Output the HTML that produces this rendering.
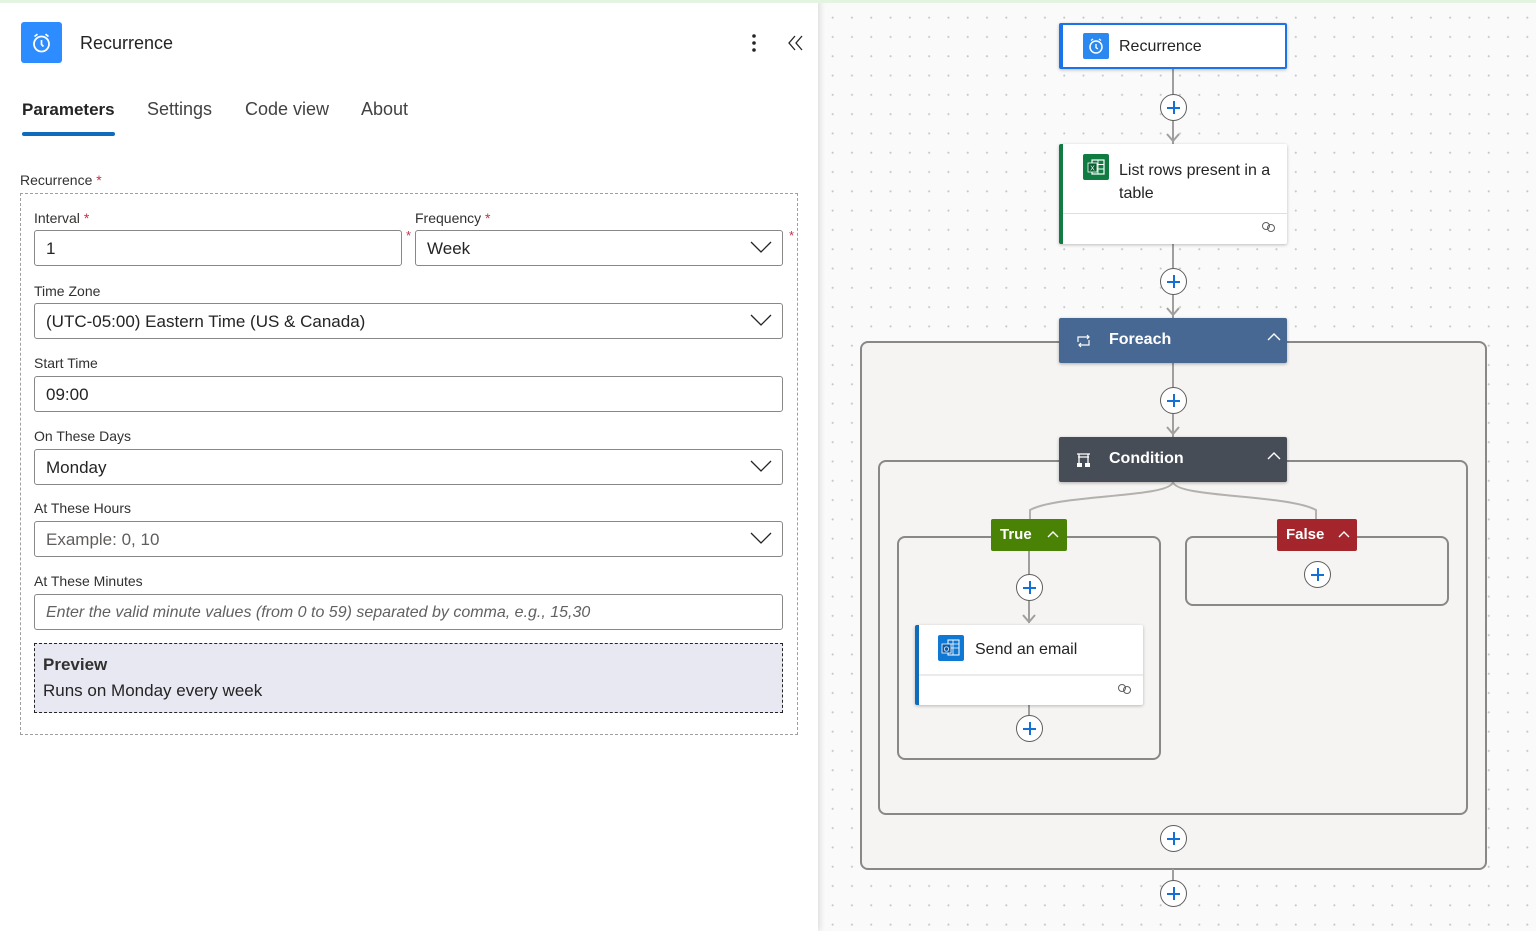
<!DOCTYPE html>
<html><head><meta charset="utf-8"><style>
*{box-sizing:border-box;margin:0;padding:0}
body{width:1536px;height:931px;overflow:hidden;position:relative;font-family:"Liberation Sans",sans-serif;color:#242424;background:#fafafa}
.a{position:absolute}
#canvas{left:818px;top:0;width:718px;height:931px;background-color:#fafafa;background-image:radial-gradient(circle,#c8c8c8 0.9px,transparent 1.2px);background-size:19.3px 19.3px;background-position:5px 8px}
#panel{left:0;top:0;width:818px;height:931px;background:#fff;box-shadow:2px 0 6px rgba(0,0,0,.12)}
#topline{left:0;top:0;width:1536px;height:3px;background:#e3f5e0}
.lbl{font-size:14px;color:#323130}
.req{color:#c4314b}
.inp{border:1px solid #8a8886;border-radius:3px;height:36px;font-size:17px;padding:8px 11px;color:#242424;background:#fff}
.chev{position:absolute;right:10px;top:8px}
.card{background:#fff;box-shadow:0 1px 3px rgba(0,0,0,.25);border-radius:2px}
.plus{width:27px;height:27px;border-radius:50%;border:1px solid #605e5c;background:#fff}
.plus:before,.plus:after{content:"";position:absolute;background:#1570d6}
.plus:before{left:6px;top:12px;width:13px;height:1.6px}
.plus:after{left:12px;top:6px;width:1.6px;height:13px}
.vl{width:2px;background:#a19f9d}
.box{border:2px solid #8a8886;border-radius:8px;background:#f5f4f2}
.hdr{color:#fff;font-size:16px;font-weight:bold;box-shadow:0 1px 3px rgba(0,0,0,.3);border-radius:2px}
.ct{font-size:16px}
</style></head><body>
<div id="canvas" class="a"></div>

<div class="a vl" style="left:1172px;top:69px;height:75px"></div>
<div class="a vl" style="left:1172px;top:244px;height:74px"></div>
<div class="a box" style="left:860px;top:341px;width:627px;height:529px"></div>
<div class="a vl" style="left:1172px;top:363px;height:74px"></div>
<div class="a box" style="left:878px;top:460px;width:590px;height:355px"></div>
<div class="a box" style="left:897px;top:536px;width:264px;height:224px"></div>
<div class="a box" style="left:1185px;top:536px;width:264px;height:70px"></div>
<svg class="a" style="left:1020px;top:480px" width="310" height="45"><path d="M153 2 C150 18 40 14 10 30 L10 40 M153 2 C156 18 266 14 296 30 L296 40" fill="none" stroke="#b3b0ad" stroke-width="2"/></svg>
<div class="a vl" style="left:1028px;top:551px;height:72px"></div>
<div class="a vl" style="left:1028px;top:705px;height:12px"></div>
<div class="a vl" style="left:1172px;top:869px;height:12px"></div>
<svg class="a" style="left:1164px;top:130px" width="18" height="14"><path d="M3 4 L9 11 L15 4" fill="none" stroke="#a19f9d" stroke-width="2"/></svg>
<svg class="a" style="left:1164px;top:304px" width="18" height="14"><path d="M3 4 L9 11 L15 4" fill="none" stroke="#a19f9d" stroke-width="2"/></svg>
<svg class="a" style="left:1164px;top:423px" width="18" height="14"><path d="M3 4 L9 11 L15 4" fill="none" stroke="#a19f9d" stroke-width="2"/></svg>
<svg class="a" style="left:1020px;top:611px" width="18" height="14"><path d="M3 4 L9 11 L15 4" fill="none" stroke="#a19f9d" stroke-width="2"/></svg>

<div class="a card" style="left:1059px;top:23px;width:228px;height:46px;border:2px solid #1a73e8;border-left-width:4px"></div>
<div class="a" style="left:1083px;top:33px;width:26px;height:26px;background:#2b88f0;border-radius:2px"><svg width="26" height="26"><circle cx="13" cy="14" r="6" fill="none" stroke="#fff" stroke-width="1.5"/><path d="M13 11v3.5l1.8 1.5M8 7.5l2-1.5M18 7.5l-2-1.5" stroke="#fff" stroke-width="1.4" fill="none"/></svg></div>
<div class="a ct" style="left:1119px;top:38px">Recurrence</div>

<div class="a card" style="left:1059px;top:144px;width:228px;height:100px;border-left:4px solid #107c41"></div>
<div class="a" style="left:1063px;top:213px;width:224px;height:1px;background:#e1dfdd"></div>
<div class="a" style="left:1083px;top:154px;width:26px;height:26px;background:#107c41;border-radius:2px"><svg width="26" height="26"><rect x="9" y="6" width="12" height="14" fill="none" stroke="#fff" stroke-width="1.2"/><path d="M9 10.5h12M9 15h12M15 6v14" stroke="#fff" stroke-width=".9"/><rect x="5" y="9" width="9" height="9" fill="#0b5c30" stroke="#fff" stroke-width=".8"/><text x="9.5" y="16.5" font-size="7" fill="#fff" text-anchor="middle" font-family="Liberation Sans">X</text></svg></div>
<div class="a ct" style="left:1119px;top:159px;line-height:23px;width:168px">List rows present in a table</div>
<svg class="a" style="left:1261px;top:221px" width="16" height="12"><circle cx="5" cy="5" r="3.5" fill="none" stroke="#605e5c"/><circle cx="10" cy="7" r="3.5" fill="none" stroke="#605e5c"/></svg>

<div class="a hdr" style="left:1059px;top:318px;width:228px;height:45px;background:#476892"></div>
<svg class="a" style="left:1075px;top:333px" width="18" height="16"><path d="M3 9V4h11M12 2l2 2-2 2M14 7v5H4M6 10l-2 2 2 2" fill="none" stroke="#fff" stroke-width="1.2"/></svg>
<div class="a" style="left:1109px;top:331px;font-size:16px;color:#fff;font-weight:bold">Foreach</div>
<svg class="a" style="left:1266px;top:331px" width="16" height="12"><path d="M2 9l6-6 6 6" fill="none" stroke="#fff" stroke-width="1.4"/></svg>

<div class="a hdr" style="left:1059px;top:437px;width:228px;height:45px;background:#474d57"></div>
<svg class="a" style="left:1075px;top:451px" width="18" height="18"><path d="M2 3h13M4 3v9M13 3v9M3 6h11" stroke="#fff" stroke-width="1.3" fill="none"/><rect x="2" y="12" width="5" height="4" fill="#fff"/><rect x="10" y="12" width="5" height="4" fill="#fff"/></svg>
<div class="a" style="left:1109px;top:450px;font-size:16px;color:#fff;font-weight:bold">Condition</div>
<svg class="a" style="left:1266px;top:450px" width="16" height="12"><path d="M2 9l6-6 6 6" fill="none" stroke="#fff" stroke-width="1.4"/></svg>

<div class="a" style="left:991px;top:519px;width:76px;height:32px;background:#498205;border-radius:2px"></div>
<div class="a" style="left:1000px;top:526px;font-size:15px;color:#fff;font-weight:bold">True</div>
<svg class="a" style="left:1046px;top:529px" width="14" height="10"><path d="M2 8l5-5 5 5" fill="none" stroke="#fff" stroke-width="1.4"/></svg>
<div class="a" style="left:1277px;top:519px;width:80px;height:32px;background:#a4262c;border-radius:2px"></div>
<div class="a" style="left:1286px;top:526px;font-size:15px;color:#fff;font-weight:bold">False</div>
<svg class="a" style="left:1337px;top:529px" width="14" height="10"><path d="M2 8l5-5 5 5" fill="none" stroke="#fff" stroke-width="1.4"/></svg>

<div class="a card" style="left:915px;top:625px;width:228px;height:80px;border-left:4px solid #0f6cbd"></div>
<div class="a" style="left:919px;top:674px;width:224px;height:2px;background:#edebe9"></div>
<div class="a" style="left:938px;top:635px;width:26px;height:26px;background:#0f78d4;border-radius:2px"><svg width="26" height="26"><rect x="10" y="5" width="11" height="15" fill="none" stroke="#fff" stroke-width="1"/><path d="M10 9h11M10 13h11M15 5v15" stroke="#fff" stroke-width=".8"/><rect x="4" y="9" width="9" height="9" fill="#0a5aa8" stroke="#fff" stroke-width=".8"/><text x="8.5" y="16.5" font-size="7" fill="#fff" text-anchor="middle" font-family="Liberation Sans">O</text></svg></div>
<div class="a ct" style="left:975px;top:641px">Send an email</div>
<svg class="a" style="left:1117px;top:683px" width="16" height="12"><circle cx="5" cy="5" r="3.5" fill="none" stroke="#605e5c"/><circle cx="10" cy="7" r="3.5" fill="none" stroke="#605e5c"/></svg>

<div class="a plus" style="left:1160px;top:94px"></div>
<div class="a plus" style="left:1160px;top:268px"></div>
<div class="a plus" style="left:1160px;top:387px"></div>
<div class="a plus" style="left:1016px;top:574px"></div>
<div class="a plus" style="left:1304px;top:561px"></div>
<div class="a plus" style="left:1016px;top:715px"></div>
<div class="a plus" style="left:1160px;top:825px"></div>
<div class="a plus" style="left:1160px;top:880px"></div>

<div id="panel" class="a"></div>
<div id="topline" class="a"></div>
<div class="a" style="left:21px;top:22px;width:41px;height:41px;background:#2d8cff;border-radius:3px"><svg width="41" height="41"><circle cx="20.5" cy="22" r="7.5" fill="none" stroke="#fff" stroke-width="1.8"/><path d="M20.5 18v4.5l2 2M13.5 14.5l3-2.3M27.5 14.5l-3-2.3" stroke="#fff" stroke-width="1.7" fill="none"/></svg></div>
<div class="a" style="left:80px;top:33px;font-size:18px">Recurrence</div>
<svg class="a" style="left:748px;top:33px" width="12" height="20"><circle cx="6" cy="3" r="1.8" fill="#242424"/><circle cx="6" cy="10" r="1.8" fill="#242424"/><circle cx="6" cy="17" r="1.8" fill="#242424"/></svg>
<svg class="a" style="left:787px;top:34px" width="18" height="18"><path d="M8 2L2 9l6 7M15 2L9 9l6 7" fill="none" stroke="#242424" stroke-width="1.3"/></svg>
<div class="a" style="left:22px;top:100px;font-size:17px;font-weight:bold">Parameters</div>
<div class="a" style="left:147px;top:99px;font-size:18px;color:#424242">Settings</div>
<div class="a" style="left:245px;top:99px;font-size:18px;color:#424242">Code view</div>
<div class="a" style="left:361px;top:99px;font-size:18px;color:#424242">About</div>
<div class="a" style="left:22px;top:132px;width:93px;height:4px;background:#0f6cbd;border-radius:2px"></div>

<div class="a lbl" style="left:20px;top:172px">Recurrence <span class="req">*</span></div>
<div class="a" style="left:20px;top:193px;width:778px;height:542px;border:1px dashed #a19f9d"></div>

<div class="a lbl" style="left:34px;top:210px">Interval <span class="req">*</span></div>
<div class="a inp" style="left:34px;top:230px;width:368px">1</div>
<div class="a req" style="left:406px;top:228px;font-size:13px">*</div>
<div class="a lbl" style="left:415px;top:210px">Frequency <span class="req">*</span></div>
<div class="a inp" style="left:415px;top:230px;width:368px">Week<svg class="chev" width="22" height="16"><path d="M1 3l10 10 10-10" fill="none" stroke="#242424" stroke-width="1.3"/></svg></div>
<div class="a req" style="left:789px;top:228px;font-size:13px">*</div>

<div class="a lbl" style="left:34px;top:283px">Time Zone</div>
<div class="a inp" style="left:34px;top:303px;width:749px">(UTC-05:00) Eastern Time (US &amp; Canada)<svg class="chev" width="22" height="16"><path d="M1 3l10 10 10-10" fill="none" stroke="#242424" stroke-width="1.3"/></svg></div>
<div class="a lbl" style="left:34px;top:355px">Start Time</div>
<div class="a inp" style="left:34px;top:376px;width:749px">09:00</div>
<div class="a lbl" style="left:34px;top:428px">On These Days</div>
<div class="a inp" style="left:34px;top:449px;width:749px">Monday<svg class="chev" width="22" height="16"><path d="M1 3l10 10 10-10" fill="none" stroke="#242424" stroke-width="1.3"/></svg></div>
<div class="a lbl" style="left:34px;top:500px">At These Hours</div>
<div class="a inp" style="left:34px;top:521px;width:749px;color:#605e5c">Example: 0, 10<svg class="chev" width="22" height="16"><path d="M1 3l10 10 10-10" fill="none" stroke="#242424" stroke-width="1.3"/></svg></div>
<div class="a lbl" style="left:34px;top:573px">At These Minutes</div>
<div class="a inp" style="left:34px;top:594px;width:749px;color:#616161;font-style:italic;font-size:16px;padding-top:9px">Enter the valid minute values (from 0 to 59) separated by comma, e.g., 15,30</div>
<div class="a" style="left:34px;top:643px;width:749px;height:70px;background:#e8e8f2;border:1px dashed #242424;padding:11px 8px">
<div style="font-size:17px;font-weight:bold;color:#323130">Preview</div>
<div style="font-size:17px;margin-top:6px">Runs on Monday every week</div></div>
</body></html>
